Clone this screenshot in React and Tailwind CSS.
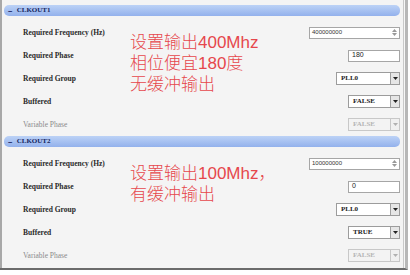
import React from "react"

const sections = [
  {
    title: "CLKOUT1",
    freq: "400000000",
    phase: "180",
    group: "PLL0",
    buffered: "FALSE",
    note: ["设置输出400Mhz", "相位便宜180度", "无缓冲输出"],
  },
  {
    title: "CLKOUT2",
    freq: "100000000",
    phase: "0",
    group: "PLL0",
    buffered: "TRUE",
    note: ["设置输出100Mhz，", "有缓冲输出"],
  },
]

const labelFont = { fontFamily: '"Liberation Serif", "DejaVu Serif", serif' }
const noteFont = { fontFamily: '"Liberation Sans", "Noto Sans CJK SC", sans-serif' }

function Arrow({ disabled }) {
  return (
    <div
      className={
        "flex w-[9px] items-center justify-center self-stretch border-l " +
        (disabled ? "border-[#c8c8c8] bg-[#f0f0f0]" : "border-[#a0a0a0] bg-[#e6e6e6]")
      }
    >
      <svg width="5" height="3" viewBox="0 0 5 3">
        <path d="M0 0H5L2.5 3Z" fill={disabled ? "#b0b0b0" : "#222"} />
      </svg>
    </div>
  )
}

function Dropdown({ value, width, disabled }) {
  return (
    <div
      className={
        "flex h-[13px] items-stretch border " +
        width +
        (disabled ? " border-[#c8c8c8] bg-[#f3f3f3]" : " border-[#9c9c9c] bg-white")
      }
    >
      <div
        className={
          "flex flex-1 items-center pl-[4px] text-[7px] font-bold " +
          (disabled ? "text-[#b5b5b5]" : "text-[#222]")
        }
        style={labelFont}
      >
        {value}
      </div>
      <Arrow disabled={disabled} />
    </div>
  )
}

function Spin({ value }) {
  return (
    <div className="flex h-[12px] w-[91px] items-stretch border border-[#a6a6a6] bg-white">
      <div className="flex flex-1 items-center pl-[2px] text-[6px] text-[#333]" style={noteFont}>
        {value}
      </div>
      <div className="flex w-[9px] flex-col items-center justify-center gap-[1px]">
        <svg width="5" height="3" viewBox="0 0 5 3">
          <path d="M0 3H5L2.5 0Z" fill="#999" />
        </svg>
        <svg width="5" height="3" viewBox="0 0 5 3">
          <path d="M0 0H5L2.5 3Z" fill="#999" />
        </svg>
      </div>
    </div>
  )
}

function Row({ label, children, muted }) {
  return (
    <div className="flex h-[23px] items-center justify-between pl-[19px]">
      <span
        className={"text-[7.5px] " + (muted ? "text-[#8a8a8a]" : "font-bold text-[#2a2a2a]")}
        style={labelFont}
      >
        {label}
      </span>
      {children}
    </div>
  )
}

function Section({ s }) {
  return (
    <div className="relative">
      <div className="flex h-[11px] items-center gap-[4px] rounded-[5px] bg-gradient-to-b from-[#bcd2f6] to-[#93b1ec] pl-[4px]">
        <span className="text-[8px] font-bold leading-none text-[#1b2a66]">−</span>
        <span className="text-[7px] font-bold text-[#14245e]" style={labelFont}>
          {s.title}
        </span>
      </div>
      <div className="mt-[5px]">
        <Row label="Required Frequency (Hz)">
          <Spin value={s.freq} />
        </Row>
        <Row label="Required Phase">
          <div
            className="flex h-[12px] w-[52px] items-center border border-[#a6a6a6] bg-white pl-[3px] text-[7px] text-[#222]"
            style={noteFont}
          >
            {s.phase}
          </div>
        </Row>
        <Row label="Required Group">
          <Dropdown value={s.group} width="w-[64px]" />
        </Row>
        <Row label="Buffered">
          <Dropdown value={s.buffered} width="w-[52px]" />
        </Row>
        <Row label="Variable Phase" muted>
          <Dropdown value="FALSE" width="w-[52px]" disabled />
        </Row>
      </div>
      <div
        className="pointer-events-none absolute left-[126px] top-[27px] text-[17px] font-light leading-[21px] text-[#e6474c]"
        style={noteFont}
      >
        {s.note.map((line) => (
          <div key={line}>{line}</div>
        ))}
      </div>
    </div>
  )
}

export default function App() {
  return (
    <div className="h-[275px] w-[410px] overflow-hidden bg-white">
      <div className="flex h-[270px] w-[408px] border-b-[2px] border-r-[3px] border-b-[#6b6b6b] border-r-[#b8b8b8]">
        <div className="w-[404px] border-l-[2px] border-r border-l-[#a8a8a8] border-r-[#c9c9c9] bg-[#f4f4f4] pl-[2px] pr-[3px] pt-[5px]">
          {sections.map((s) => (
            <Section key={s.title} s={s} />
          ))}
        </div>
        <div className="flex-1 bg-[#f7f7f7]" />
      </div>
    </div>
  )
}
